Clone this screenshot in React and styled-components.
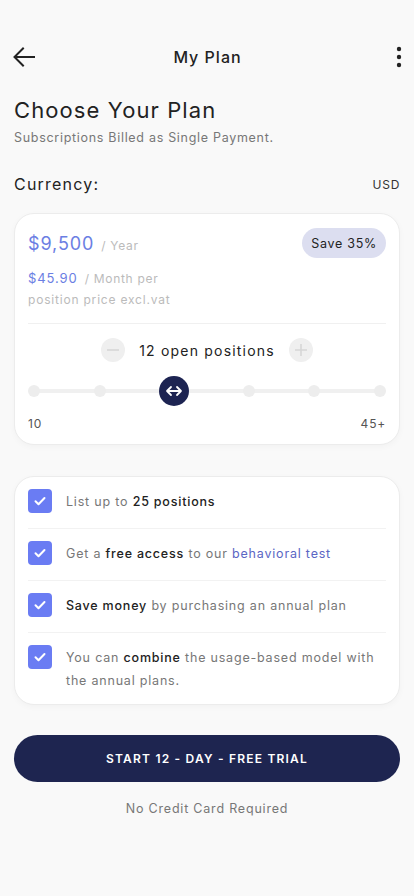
import React from "react";
import styled, { createGlobalStyle } from "styled-components";

const Global = createGlobalStyle`
  html, body { margin: 0; padding: 0; background: #f9f9f9; }
  body { font-family: Inter, "Noto Sans", sans-serif; color: #222; -webkit-font-smoothing: antialiased; }
  * { box-sizing: border-box; }
`;

const Page = styled.div`
  width: 414px;
  min-height: 896px;
  background: #f9f9f9;
  padding: 0 14px;
  display: flex;
  flex-direction: column;
`;

const Header = styled.header`
  height: 60px;
  margin: 27px -2px 0 -1px;
  display: flex;
  align-items: center;
  justify-content: space-between;
`;

const HeaderBtn = styled.div`
  width: 40px;
  height: 24px;
  display: flex;
  align-items: center;
  justify-content: ${(p) => (p.$end ? "flex-end" : "flex-start")};
`;

const Title = styled.h1`
  margin: 0;
  font-size: 16px;
  font-weight: 500;
  letter-spacing: 1px;
  color: #222;
`;

const H2 = styled.h2`
  margin: 9px 0 0;
  font-size: 22px;
  font-weight: 400;
  letter-spacing: 1.1px;
  color: #222;
  line-height: 28px;
`;

const Sub = styled.p`
  margin: 6px 0 0;
  font-size: 12.5px;
  letter-spacing: 0.7px;
  color: #777;
`;

const CurrencyRow = styled.div`
  margin-top: 29px;
  display: flex;
  justify-content: space-between;
  align-items: center;
`;

const CurrencyLabel = styled.span`
  font-size: 16px;
  letter-spacing: 1.2px;
  color: #222;
`;

const CurrencyValue = styled.span`
  font-size: 12px;
  letter-spacing: 0.7px;
  color: #333;
`;

const Card = styled.section`
  background: #fff;
  border: 1px solid #ececec;
  border-radius: 20px;
  box-shadow: 0 2px 6px rgba(0, 0, 0, 0.03);
  margin-top: ${(p) => p.$mt}px;
  padding: ${(p) => p.$pad};
`;

const PriceTop = styled.div`
  display: flex;
  justify-content: space-between;
  align-items: center;
`;

const Price = styled.span`
  font-size: ${(p) => p.$size}px;
  color: #6b7ee3;
  letter-spacing: 0.9px;
`;

const Per = styled.span`
  font-size: 12px;
  color: #bbb;
  letter-spacing: 0.7px;
  margin-left: 7px;
`;

const Badge = styled.span`
  background: #dcdef0;
  color: #222;
  border-radius: 15px;
  padding: 0 9px;
  height: 30px;
  display: inline-flex;
  align-items: center;
  font-size: 12.5px;
  letter-spacing: 0.7px;
`;

const MonthRow = styled.div`
  margin-top: 9px;
  line-height: 20px;
`;

const Note = styled.div`
  font-size: 12px;
  color: #bbb;
  letter-spacing: 0.8px;
  line-height: 22px;
`;

const Divider = styled.div`
  height: 1px;
  background: #f0f0f0;
  margin: ${(p) => p.$m};
`;

const Stepper = styled.div`
  display: flex;
  align-items: center;
  justify-content: center;
  gap: 14px;
  margin-top: 14px;
`;

const StepBtn = styled.div`
  width: 24px;
  height: 24px;
  border-radius: 50%;
  background: #efefef;
  display: flex;
  align-items: center;
  justify-content: center;
`;

const StepText = styled.span`
  font-size: 14px;
  letter-spacing: 1.2px;
  color: #222;
`;

const Slider = styled.div`
  position: relative;
  height: 32px;
  margin-top: 13px;
  display: flex;
  align-items: center;
  justify-content: space-between;
`;

const Track = styled.div`
  position: absolute;
  left: 6px;
  right: 6px;
  top: 14px;
  height: 4px;
  background: #f0f0f0;
`;

const Dot = styled.div`
  position: relative;
  width: 12px;
  height: 12px;
  border-radius: 50%;
  background: #ededed;
`;

const Thumb = styled.div`
  position: relative;
  width: 30px;
  height: 30px;
  border-radius: 50%;
  background: #1d2452;
  display: flex;
  align-items: center;
  justify-content: center;
`;

const RangeLabels = styled.div`
  display: flex;
  justify-content: space-between;
  font-size: 12px;
  letter-spacing: 0.8px;
  color: #555;
  margin-top: 9px;
`;

const FeatureRow = styled.div`
  display: flex;
  align-items: flex-start;
  gap: 14px;
  padding: ${(p) => (p.$last ? "12px 0 12px" : "12px 0 15px")};
  border-bottom: ${(p) => (p.$last ? "none" : "1px solid #f2f2f2")};
`;

const Check = styled.div`
  flex: none;
  width: 24px;
  height: 24px;
  border-radius: 4px;
  background: #6a7cf3;
  display: flex;
  align-items: center;
  justify-content: center;
`;

const FeatureText = styled.p`
  margin: 0;
  font-size: 12.5px;
  letter-spacing: 0.8px;
  line-height: 23px;
  color: #777;
  padding-top: 1px;
`;

const Strong = styled.span`
  color: #222;
  font-weight: 500;
`;

const LinkText = styled.span`
  color: #5b66c4;
`;

const CTA = styled.button`
  margin-top: 30px;
  height: 47px;
  width: 100%;
  border: none;
  border-radius: 24px;
  background: #1e2550;
  color: #fff;
  font-family: Inter, "Noto Sans", sans-serif;
  font-weight: 600;
  font-size: 12px;
  letter-spacing: 1.2px;
`;

const Footnote = styled.p`
  margin: 19px 0 0;
  text-align: center;
  font-size: 12.5px;
  letter-spacing: 0.8px;
  color: #777;
`;

const CheckIcon = () => (
  <svg width="14" height="14" viewBox="0 0 14 14" fill="none">
    <path d="M2.5 7.3l3 3 6-6.3" stroke="#fff" strokeWidth="2" strokeLinecap="round" strokeLinejoin="round" />
  </svg>
);

const features = [
  <>List up to <Strong>25 positions</Strong></>,
  <>Get a <Strong>free access</Strong> to our <LinkText>behavioral test</LinkText></>,
  <><Strong>Save money</Strong> by purchasing an annual plan</>,
  <>You can <Strong>combine</Strong> the usage-based model with the annual plans.</>,
];

export default function App() {
  return (
    <>
      <Global />
      <Page>
        <Header>
          <HeaderBtn>
            <svg width="22" height="20" viewBox="0 0 22 20" fill="none">
              <path d="M21 10H2M10 1.5L1.5 10 10 18.5" stroke="#222" strokeWidth="2" strokeLinecap="square" />
            </svg>
          </HeaderBtn>
          <Title>My Plan</Title>
          <HeaderBtn $end>
            <svg width="6" height="22" viewBox="0 0 6 22">
              <circle cx="3" cy="3" r="2.2" fill="#222" />
              <circle cx="3" cy="11" r="2.2" fill="#222" />
              <circle cx="3" cy="19" r="2.2" fill="#222" />
            </svg>
          </HeaderBtn>
        </Header>

        <H2>Choose Your Plan</H2>
        <Sub>Subscriptions Billed as Single Payment.</Sub>

        <CurrencyRow>
          <CurrencyLabel>Currency:</CurrencyLabel>
          <CurrencyValue>USD</CurrencyValue>
        </CurrencyRow>

        <Card $mt={19} $pad="14px 13px 13px">
          <PriceTop>
            <div>
              <Price $size={18}>$9,500</Price>
              <Per>/ Year</Per>
            </div>
            <Badge>Save 35%</Badge>
          </PriceTop>
          <MonthRow>
            <Price $size={13}>$45.90</Price>
            <Per>/ Month per</Per>
          </MonthRow>
          <Note>position price excl.vat</Note>
          <Divider $m="12px 0 0" />
          <Stepper>
            <StepBtn>
              <svg width="14" height="14" viewBox="0 0 14 14">
                <path d="M1 7h12" stroke="#d6d6d6" strokeWidth="1.6" />
              </svg>
            </StepBtn>
            <StepText>12 open positions</StepText>
            <StepBtn>
              <svg width="14" height="14" viewBox="0 0 14 14">
                <path d="M1 7h12M7 1v12" stroke="#d6d6d6" strokeWidth="1.6" />
              </svg>
            </StepBtn>
          </Stepper>
          <Slider>
            <Track />
            <Dot />
            <Dot />
            <Thumb>
              <svg width="18" height="12" viewBox="0 0 18 12" fill="none">
                <path d="M2 6h14M6 2L2 6l4 4M12 2l4 4-4 4" stroke="#fff" strokeWidth="1.8" strokeLinecap="round" strokeLinejoin="round" />
              </svg>
            </Thumb>
            <Dot />
            <Dot />
            <Dot />
          </Slider>
          <RangeLabels>
            <span>10</span>
            <span>45+</span>
          </RangeLabels>
        </Card>

        <Card $mt={31} $pad="0 13px">
          {features.map((f, i) => (
            <FeatureRow key={i} $last={i === features.length - 1}>
              <Check>
                <CheckIcon />
              </Check>
              <FeatureText>{f}</FeatureText>
            </FeatureRow>
          ))}
        </Card>

        <CTA>START 12 - DAY - FREE TRIAL</CTA>
        <Footnote>No Credit Card Required</Footnote>
      </Page>
    </>
  );
}
